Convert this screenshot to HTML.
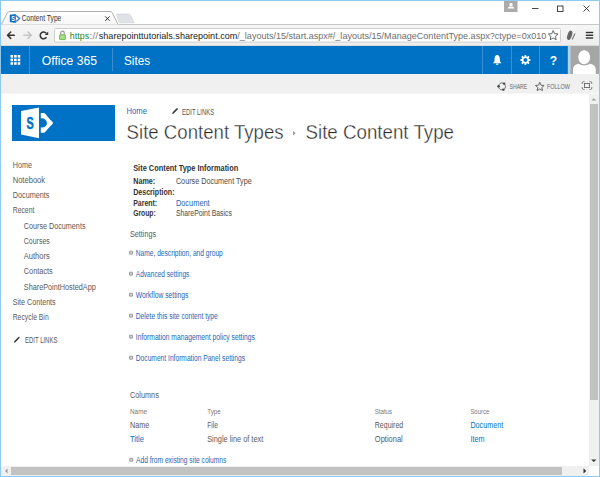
<!DOCTYPE html>
<html><head><meta charset="utf-8"><style>
html,body{margin:0;padding:0;width:600px;height:477px;overflow:hidden;background:#fff}
svg{display:block;font-family:"Liberation Sans", sans-serif}
</style></head><body>
<svg width="600" height="477" viewBox="0 0 600 477">
<rect x="0" y="0" width="600" height="477" fill="#ffffff" />
<path d="M1,25 L7.5,12.5 Q8.5,11.5 10,11.5 L110,11.5 Q111.5,11.5 112.2,12.5 L118,24.5 Z" fill="url(#tab)" stroke="#b0b0b0" stroke-width="1" />
<path d="M116.5,14 L128,14 Q129.5,14 130.3,15 L134.2,22.8 L120.5,22.8 Q119.3,22.8 118.8,21.8 Z" fill="#dfe3e8" stroke="#c9cdd2" stroke-width="0.6" />
<defs><linearGradient id="tb" x1="0" y1="0" x2="0" y2="1"><stop offset="0" stop-color="#f6f6f6"/><stop offset="1" stop-color="#ededed"/></linearGradient><linearGradient id="tab" x1="0" y1="0" x2="0" y2="1"><stop offset="0" stop-color="#ffffff"/><stop offset="1" stop-color="#f6f6f6"/></linearGradient></defs>
<rect x="1" y="25" width="598" height="21" fill="url(#tb)" />
<path d="M1,45.5 L599,45.5" fill="none" stroke="#dadada" stroke-width="1" />
<path d="M1,24.5 L600,24.5" fill="none" stroke="#c8c8c8" stroke-width="1" />
<path d="M1.6,25 L117.6,25" fill="none" stroke="#f6f6f6" stroke-width="1.2" />
<rect x="54.5" y="28.5" width="506" height="13.6" fill="#ffffff" rx="1" stroke="#cdcdcd" stroke-width="1"/>
<rect x="504" y="1" width="13.5" height="11" fill="#ababab" />
<path d="M511,2.9 a1.7,1.7 0 1,0 0.01,0 Z" fill="#ffffff" stroke="none" stroke-width="1" />
<path d="M507.6,8.6 Q507.8,6.6 509.6,6.4 Q511,7.1 512.4,6.4 Q514.2,6.6 514.4,8.6 Z" fill="#ffffff" stroke="none" stroke-width="1" />
<path d="M532,8.5 L538.5,8.5" fill="none" stroke="#333" stroke-width="0.9" />
<rect x="557.5" y="6" width="5.5" height="5.5" fill="none" stroke="#333" stroke-width="0.9"/>
<path d="M583.5,5.5 L589.5,11.5 M589.5,5.5 L583.5,11.5" fill="none" stroke="#333" stroke-width="0.9" />
<rect x="1" y="46" width="568" height="28" fill="#0072c6" />
<rect x="569" y="46" width="30" height="28" fill="#a6a6a6" />
<path d="M29.5,46 L29.5,74" fill="none" stroke="#3a8fd4" stroke-width="1" />
<path d="M482.5,46 L482.5,74" fill="none" stroke="#3a8fd4" stroke-width="1" />
<path d="M511.5,46 L511.5,74" fill="none" stroke="#3a8fd4" stroke-width="1" />
<path d="M539.5,46 L539.5,74" fill="none" stroke="#3a8fd4" stroke-width="1" />
<path d="M112.5,48 L112.5,71" fill="none" stroke="#3a8fd4" stroke-width="1" />
<rect x="10.5" y="55.0" width="2.6" height="2.6" fill="#ffffff" />
<rect x="10.5" y="58.6" width="2.6" height="2.6" fill="#ffffff" />
<rect x="10.5" y="62.2" width="2.6" height="2.6" fill="#ffffff" />
<rect x="14.1" y="55.0" width="2.6" height="2.6" fill="#ffffff" />
<rect x="14.1" y="58.6" width="2.6" height="2.6" fill="#ffffff" />
<rect x="14.1" y="62.2" width="2.6" height="2.6" fill="#ffffff" />
<rect x="17.7" y="55.0" width="2.6" height="2.6" fill="#ffffff" />
<rect x="17.7" y="58.6" width="2.6" height="2.6" fill="#ffffff" />
<rect x="17.7" y="62.2" width="2.6" height="2.6" fill="#ffffff" />
<rect x="1" y="74" width="598" height="19.5" fill="#f0f0f0" />
<rect x="589" y="94" width="10" height="373" fill="#f0f0f0" />
<rect x="590" y="104" width="8" height="296" fill="#c2c2c2" />
<rect x="1" y="466" width="588" height="10" fill="#f0f0f0" />
<rect x="11" y="467" width="551" height="8" fill="#c2c2c2" />
<rect x="589" y="466" width="10" height="10" fill="#ffffff" />
<rect x="0" y="0" width="600" height="1" fill="#8fc9ef" />
<rect x="0" y="0" width="1" height="477" fill="#8fc9ef" />
<rect x="599" y="0" width="1" height="477" fill="#8fc9ef" />
<rect x="0" y="476" width="600" height="1" fill="#8fc9ef" />
<rect x="12" y="105" width="103" height="36" fill="#0072c6" />
<path d="M9.8,14.8 L15.8,13.9 L15.8,23 L9.8,22 Z" fill="#0a6cc4" stroke="none" stroke-width="1" />
<path d="M16.2,15.6 L19.6,18.5 L16.2,21.4" fill="none" stroke="#2b7fd0" stroke-width="1.3" />
<text x="11.3" y="21.2" font-size="7" fill="#fff" font-weight="bold" textLength="3.6" lengthAdjust="spacingAndGlyphs" >S</text>
<path d="M105.2,16.4 L109.6,20.8 M109.6,16.4 L105.2,20.8" fill="none" stroke="#333" stroke-width="1" />
<path d="M7.6,35.2 L14.3,35.2 M10.7,32 L7.5,35.2 L10.7,38.4" fill="none" stroke="#333" stroke-width="1.5" stroke-linecap="round" stroke-linejoin="round"/>
<path d="M23.8,35.2 L31.2,35.2 M28,32 L31.3,35.2 L28,38.4" fill="none" stroke="#c4c4c4" stroke-width="1.5" stroke-linecap="round" stroke-linejoin="round"/>
<path d="M46.5,37.2 A3.4,3.4 0 1,1 46.2,33.2" fill="none" stroke="#333" stroke-width="1.5" />
<path d="M44.9,34.9 L48.2,34.9 L48.2,31.5 Z" fill="#333" stroke="none" stroke-width="1" />
<path d="M60.7,34.6 L60.7,32.9 A1.8,1.8 0 0,1 64.3,32.9 L64.3,34.6" fill="none" stroke="#9a9a9a" stroke-width="1.2" />
<rect x="59.6" y="34.7" width="5.8" height="4.9" fill="#a6dc86" rx="0.5" stroke="#5aad3a" stroke-width="0.8"/>
<path d="M553.20,30.50 L554.61,33.66 L558.05,34.02 L555.48,36.34 L556.20,39.73 L553.20,38.00 L550.20,39.73 L550.92,36.34 L548.35,34.02 L551.79,33.66 Z" fill="none" stroke="#555" stroke-width="0.9" stroke-linejoin="round"/>
<ellipse cx="569.7" cy="35.3" rx="2.2" ry="4.9" transform="rotate(18 569.7 35.3)" fill="#666"/>
<path d="M572.2,39.6 L575,33.4" fill="none" stroke="#777" stroke-width="1.1" />
<rect x="585.8" y="31.8" width="7.4" height="1.4" fill="#333" />
<rect x="585.8" y="34.6" width="7.4" height="1.4" fill="#333" />
<rect x="585.8" y="37.3" width="7.4" height="1.4" fill="#333" />
<path d="M497.2,55 Q499.6,55.4 499.8,58.5 L500,61.5 L501.5,63.3 L492.9,63.3 L494.4,61.5 L494.6,58.5 Q494.8,55.4 497.2,55 Z" fill="#fff" stroke="none" stroke-width="1" />
<rect x="496" y="63.6" width="2.4" height="1.2" fill="#fff" rx="0.6"/>
<path d="M528.99,59.12 L530.43,59.14 L530.43,60.86 L528.99,60.88 L528.56,61.92 L529.56,62.94 L528.34,64.16 L527.32,63.16 L526.28,63.59 L526.26,65.03 L524.54,65.03 L524.52,63.59 L523.48,63.16 L522.46,64.16 L521.24,62.94 L522.24,61.92 L521.81,60.88 L520.37,60.86 L520.37,59.14 L521.81,59.12 L522.24,58.08 L521.24,57.06 L522.46,55.84 L523.48,56.84 L524.52,56.41 L524.54,54.97 L526.26,54.97 L526.28,56.41 L527.32,56.84 L528.34,55.84 L529.56,57.06 L528.56,58.08 Z M523.4,60 a2,2 0 1,0 4,0 a2,2 0 1,0 -4,0 Z" fill="#fff" stroke="none" stroke-width="1" fill-rule="evenodd"/>
<text x="549.8" y="64.5" font-size="13" fill="#fff" font-weight="bold" textLength="7.4" lengthAdjust="spacingAndGlyphs" >?</text>
<rect x="567.8" y="46" width="2.7" height="28" fill="#b8d3e8" />
<path d="M584.2,50.2 a5.9,7 0 1,0 0.01,0 Z" fill="#fff" stroke="none" stroke-width="1" />
<path d="M573,74 L573,70 Q573,64.5 578.5,63.8 Q581,65.5 584.2,65.5 Q587.4,65.5 590,63.8 Q595.8,64.5 595.8,70 L595.8,74 Z" fill="#fff" stroke="none" stroke-width="1" />
<path d="M502,82.9 a3.5,3.5 0 1,0 0.01,0" fill="none" stroke="#666" stroke-width="0.9" />
<circle cx="504.1" cy="83.6" r="1.2" fill="#444"/><circle cx="498.6" cy="86.2" r="1.2" fill="#444"/><circle cx="503.4" cy="89.6" r="1.2" fill="#444"/>
<path d="M539.80,82.30 L541.03,85.20 L544.17,85.48 L541.80,87.55 L542.50,90.62 L539.80,89.00 L537.10,90.62 L537.80,87.55 L535.43,85.48 L538.57,85.20 Z" fill="none" stroke="#5a5a5a" stroke-width="0.9" stroke-linejoin="round"/>
<path d="M582.2,84 L582.2,83 Q582.2,81.6 583.6,81.6 L584.6,81.6 M589.4,81.6 L590.4,81.6 Q591.8,81.6 591.8,83 L591.8,84 M591.8,87 L591.8,88 Q591.8,89.4 590.4,89.4 L589.4,89.4 M584.6,89.4 L583.6,89.4 Q582.2,89.4 582.2,88 L582.2,87" fill="none" stroke="#707070" stroke-width="0.9" />
<rect x="584.5" y="83.5" width="5" height="4" fill="none" stroke="#707070" stroke-width="1"/>
<path d="M591.5,100.5 L593.8,98.2 L596.1,100.5 Z" fill="#9a9a9a" stroke="none" stroke-width="1" />
<path d="M591.2,459.5 L593.8,462.1 L596.4,459.5 Z" fill="#333" stroke="none" stroke-width="1" />
<path d="M7.5,468.5 L5,471 L7.5,473.5 Z" fill="#9a9a9a" stroke="none" stroke-width="1" />
<path d="M583.5,468.2 L586.2,470.9 L583.5,473.6 Z" fill="#333" stroke="none" stroke-width="1" />
<path d="M21.1,111.1 L39,107.5 L39,138.2 L21.1,134.4 Z" fill="#fff" stroke="none" stroke-width="1" />
<text x="26.6" y="128.5" font-size="16" fill="#0072c6" font-weight="bold" textLength="7.2" lengthAdjust="spacingAndGlyphs" stroke="#0072c6" stroke-width="0.5">S</text>
<path d="M40.8,113 L43.6,113 Q44.8,113 45.6,114.2 L50.5,120 Q51.5,120.5 53.2,123 Q51.5,125.5 50.5,126 L45.6,131.6 Q44.8,132.8 43.6,132.8 L40.8,132.8 L40.8,127.6 L42.8,127.6 Q46.6,126.6 47,123 Q46.6,119.4 42.8,118.2 L40.8,118.2 Z" fill="#fff" stroke="none" stroke-width="1" />
<path d="M172.2,114.2 L172.6,112.3 L176.6,108.3 Q177.3,107.9 177.8,108.6 Q178.1,109.2 177.7,109.5 L173.7,113.6 Z" fill="#3a3a3a" stroke="none" stroke-width="1" />
<path d="M14,342.8 L14.4,340.9 L18.4,336.9 Q19.1,336.5 19.6,337.2 Q19.9,337.8 19.5,338.1 L15.5,342.2 Z" fill="#3a3a3a" stroke="none" stroke-width="1" />
<path d="M293,131 L295.6,133.3 L293,135.6 Z" fill="#999" stroke="none" stroke-width="1" />
<text x="21.8" y="21" font-size="8.5" fill="#333" font-weight="normal" textLength="39.5" lengthAdjust="spacingAndGlyphs" >Content Type</text>
<text x="69.8" y="38.7" font-size="9.8" fill="#1e8a2e" font-weight="normal" textLength="19.4" lengthAdjust="spacingAndGlyphs" >https</text>
<text x="89.6" y="38.7" font-size="9.8" fill="#888" font-weight="normal" textLength="8.4" lengthAdjust="spacingAndGlyphs" >://</text>
<text x="98.8" y="38.7" font-size="9.8" fill="#222" font-weight="normal" textLength="138.5" lengthAdjust="spacingAndGlyphs" >sharepointtutorials.sharepoint.com</text>
<text x="237.3" y="38.7" font-size="9.8" fill="#6e6e6e" font-weight="normal" textLength="309" lengthAdjust="spacingAndGlyphs" >/_layouts/15/start.aspx#/_layouts/15/ManageContentType.aspx?ctype=0x010</text>
<text x="41.8" y="64.8" font-size="13.4" fill="#ffffff" font-weight="normal" textLength="55.2" lengthAdjust="spacingAndGlyphs" >Office 365</text>
<text x="124" y="64.8" font-size="13.4" fill="#ffffff" font-weight="normal" textLength="26" lengthAdjust="spacingAndGlyphs" >Sites</text>
<text x="509.6" y="88.9" font-size="7.7" fill="#666" font-weight="normal" textLength="17.6" lengthAdjust="spacingAndGlyphs" >SHARE</text>
<text x="547" y="88.9" font-size="7.7" fill="#666" font-weight="normal" textLength="23" lengthAdjust="spacingAndGlyphs" >FOLLOW</text>
<text x="126.6" y="114.2" font-size="8.6" fill="#1f66b8" font-weight="normal" textLength="20.4" lengthAdjust="spacingAndGlyphs" >Home</text>
<text x="182" y="114.9" font-size="8.8" fill="#555" font-weight="normal" textLength="32.2" lengthAdjust="spacingAndGlyphs" >EDIT LINKS</text>
<text x="126.6" y="138.6" font-size="21" fill="#2a2a2a" font-weight="normal" textLength="157" lengthAdjust="spacingAndGlyphs" stroke="#fff" stroke-width="0.38">Site Content Types</text>
<text x="305.5" y="138.6" font-size="21" fill="#2a2a2a" font-weight="normal" textLength="148.5" lengthAdjust="spacingAndGlyphs" stroke="#fff" stroke-width="0.38">Site Content Type</text>
<text x="12.7" y="167.6" font-size="8.5" fill="#5a5a5a" font-weight="normal" textLength="19.2" lengthAdjust="spacingAndGlyphs" >Home</text>
<text x="12.7" y="182.70000000000002" font-size="8.5" fill="#5a5a5a" font-weight="normal" textLength="32.4" lengthAdjust="spacingAndGlyphs" >Notebook</text>
<text x="12.7" y="198.20000000000002" font-size="8.5" fill="#5a5a5a" font-weight="normal" textLength="36.8" lengthAdjust="spacingAndGlyphs" >Documents</text>
<text x="12.7" y="213.3" font-size="8.5" fill="#5a5a5a" font-weight="normal" textLength="21.7" lengthAdjust="spacingAndGlyphs" >Recent</text>
<text x="23.8" y="228.70000000000002" font-size="8.5" fill="#5a5a5a" font-weight="normal" textLength="61.7" lengthAdjust="spacingAndGlyphs" >Course Documents</text>
<text x="23.8" y="243.9" font-size="8.5" fill="#5a5a5a" font-weight="normal" textLength="26" lengthAdjust="spacingAndGlyphs" >Courses</text>
<text x="23.8" y="259.4" font-size="8.5" fill="#5a5a5a" font-weight="normal" textLength="26" lengthAdjust="spacingAndGlyphs" >Authors</text>
<text x="23.8" y="274.4" font-size="8.5" fill="#5a5a5a" font-weight="normal" textLength="29" lengthAdjust="spacingAndGlyphs" >Contacts</text>
<text x="23.8" y="289.9" font-size="8.5" fill="#5a5a5a" font-weight="normal" textLength="72" lengthAdjust="spacingAndGlyphs" >SharePointHostedApp</text>
<text x="12.7" y="305.09999999999997" font-size="8.5" fill="#5a5a5a" font-weight="normal" textLength="43" lengthAdjust="spacingAndGlyphs" >Site Contents</text>
<text x="12.7" y="320.4" font-size="8.5" fill="#5a5a5a" font-weight="normal" textLength="36" lengthAdjust="spacingAndGlyphs" >Recycle Bin</text>
<text x="25" y="343" font-size="8.8" fill="#555" font-weight="normal" textLength="32.4" lengthAdjust="spacingAndGlyphs" >EDIT LINKS</text>
<text x="133.2" y="171.2" font-size="8.6" fill="#333" font-weight="bold" textLength="105" lengthAdjust="spacingAndGlyphs" >Site Content Type Information</text>
<text x="133.2" y="184" font-size="8.6" fill="#333" font-weight="bold" textLength="22" lengthAdjust="spacingAndGlyphs" >Name:</text>
<text x="133.2" y="194.5" font-size="8.6" fill="#333" font-weight="bold" textLength="41.3" lengthAdjust="spacingAndGlyphs" >Description:</text>
<text x="133.2" y="205.5" font-size="8.6" fill="#333" font-weight="bold" textLength="24" lengthAdjust="spacingAndGlyphs" >Parent:</text>
<text x="133.2" y="216" font-size="8.6" fill="#333" font-weight="bold" textLength="22.5" lengthAdjust="spacingAndGlyphs" >Group:</text>
<text x="175.9" y="184" font-size="8.5" fill="#4a4a4a" font-weight="normal" textLength="75.8" lengthAdjust="spacingAndGlyphs" >Course Document Type</text>
<text x="175.9" y="205.5" font-size="8.5" fill="#2566b5" font-weight="normal" textLength="33.8" lengthAdjust="spacingAndGlyphs" >Document</text>
<text x="175.9" y="216" font-size="8.5" fill="#4a4a4a" font-weight="normal" textLength="56" lengthAdjust="spacingAndGlyphs" >SharePoint Basics</text>
<text x="130" y="236.8" font-size="8.5" fill="#5a5a5a" font-weight="normal" textLength="26" lengthAdjust="spacingAndGlyphs" >Settings</text>
<rect x="129.5" y="251.2" width="3" height="3" fill="#d0d0d0" rx="0.3" stroke="#808080" stroke-width="0.7"/>
<text x="135.8" y="255.5" font-size="8.4" fill="#2566b5" font-weight="normal" textLength="87" lengthAdjust="spacingAndGlyphs" >Name, description, and group</text>
<rect x="129.5" y="272.2" width="3" height="3" fill="#d0d0d0" rx="0.3" stroke="#808080" stroke-width="0.7"/>
<text x="135.8" y="276.5" font-size="8.4" fill="#2566b5" font-weight="normal" textLength="53.6" lengthAdjust="spacingAndGlyphs" >Advanced settings</text>
<rect x="129.5" y="293.2" width="3" height="3" fill="#d0d0d0" rx="0.3" stroke="#808080" stroke-width="0.7"/>
<text x="135.8" y="297.5" font-size="8.4" fill="#2566b5" font-weight="normal" textLength="52.6" lengthAdjust="spacingAndGlyphs" >Workflow settings</text>
<rect x="129.5" y="314.2" width="3" height="3" fill="#d0d0d0" rx="0.3" stroke="#808080" stroke-width="0.7"/>
<text x="135.8" y="318.5" font-size="8.4" fill="#2566b5" font-weight="normal" textLength="82" lengthAdjust="spacingAndGlyphs" >Delete this site content type</text>
<rect x="129.5" y="335.2" width="3" height="3" fill="#d0d0d0" rx="0.3" stroke="#808080" stroke-width="0.7"/>
<text x="135.8" y="339.5" font-size="8.4" fill="#2566b5" font-weight="normal" textLength="119" lengthAdjust="spacingAndGlyphs" >Information management policy settings</text>
<rect x="129.5" y="356.2" width="3" height="3" fill="#d0d0d0" rx="0.3" stroke="#808080" stroke-width="0.7"/>
<text x="135.8" y="360.5" font-size="8.4" fill="#2566b5" font-weight="normal" textLength="109.3" lengthAdjust="spacingAndGlyphs" >Document Information Panel settings</text>
<text x="130" y="398.4" font-size="8.5" fill="#5a5a5a" font-weight="normal" textLength="28.8" lengthAdjust="spacingAndGlyphs" >Columns</text>
<text x="130" y="414.2" font-size="7.2" fill="#777777" font-weight="normal" textLength="17" lengthAdjust="spacingAndGlyphs" >Name</text>
<text x="207.2" y="414.2" font-size="7.2" fill="#777777" font-weight="normal" textLength="13.6" lengthAdjust="spacingAndGlyphs" >Type</text>
<text x="374.8" y="414.2" font-size="7.2" fill="#777777" font-weight="normal" textLength="17.2" lengthAdjust="spacingAndGlyphs" >Status</text>
<text x="470.4" y="414.2" font-size="7.2" fill="#777777" font-weight="normal" textLength="18.8" lengthAdjust="spacingAndGlyphs" >Source</text>
<text x="130" y="428" font-size="8.5" fill="#5a5a5a" font-weight="normal" textLength="19.2" lengthAdjust="spacingAndGlyphs" >Name</text>
<text x="207.2" y="428" font-size="8.5" fill="#5a5a5a" font-weight="normal" textLength="10.8" lengthAdjust="spacingAndGlyphs" >File</text>
<text x="374.8" y="428" font-size="8.5" fill="#5a5a5a" font-weight="normal" textLength="28.4" lengthAdjust="spacingAndGlyphs" >Required</text>
<text x="470.4" y="428" font-size="8.5" fill="#0072c6" font-weight="normal" textLength="32.8" lengthAdjust="spacingAndGlyphs" >Document</text>
<text x="130" y="442" font-size="8.5" fill="#0072c6" font-weight="normal" textLength="14" lengthAdjust="spacingAndGlyphs" >Title</text>
<text x="207.2" y="442" font-size="8.5" fill="#5a5a5a" font-weight="normal" textLength="56" lengthAdjust="spacingAndGlyphs" >Single line of text</text>
<text x="374.8" y="442" font-size="8.5" fill="#5a5a5a" font-weight="normal" textLength="28" lengthAdjust="spacingAndGlyphs" >Optional</text>
<text x="470.4" y="442" font-size="8.5" fill="#0072c6" font-weight="normal" textLength="14" lengthAdjust="spacingAndGlyphs" >Item</text>
<rect x="129.8" y="458.3" width="3" height="3" fill="#d0d0d0" rx="0.3" stroke="#808080" stroke-width="0.7"/>
<text x="136" y="462.6" font-size="8.2" fill="#2566b5" font-weight="normal" textLength="90.4" lengthAdjust="spacingAndGlyphs" >Add from existing site columns</text>
</svg>
</body></html>
